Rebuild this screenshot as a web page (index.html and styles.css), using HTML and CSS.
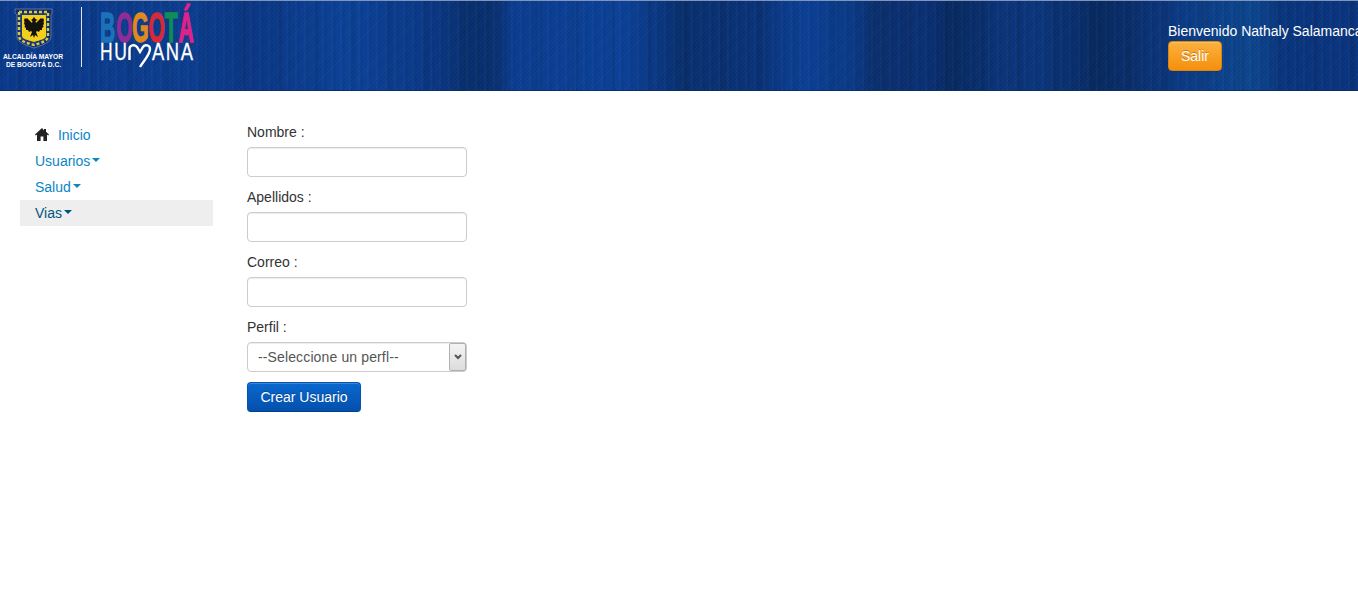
FILE: index.html
```html
<!DOCTYPE html>
<html lang="es">

<head>
	<meta charset="UTF-8">
	<title>Crear Usuario</title>
	<link rel="stylesheet" href="styles.css">
</head>

<body>
	<!-- cabecera -->
	<header class="top">
		<svg class="logo" width="200" height="89" viewBox="0 0 200 89">
			<!-- escudo -->
			<path class="shield-edge" d="M15 8h37v4l-1 2v21c0 7-9 9-17 12c-8-3-17-5-17-12V14l-2-2z"/>
			<path class="shield-trim" d="M19 11h29v24c0 5-7 7-14 9c-7-2-15-4-15-9z"/>
			<path class="shield-gold" d="M22 14h24v21c0 3-6 4-12 6c-6-2-12-3-12-6z"/>
			<path class="eagle" d="M34 16l1.500 2l2 1l-2 1l.5 2l2-2l3-3l1 1l1-1l1 2l-.5 2l.5 2l-1 1l.5 2l-1.500 1l0 2l-2 0l-1 2l-2-1l-1 1l2 5l-3-2l-1 3l-1-3l-3 2l2-5l-1-1l-2 1l-1-2l-2 0l0-2l-1.500-1l.5-2l-1-1l.5-2l-.5-2l1-2l1 1l1-1l3 3l2 2l.5-2l-1.500-1l1.500-1z"/>
			<!-- letrero alcaldia -->
			<text class="city" x="3" y="58" textLength="60" lengthAdjust="spacingAndGlyphs">ALCALDÍA MAYOR</text>
			<text class="city" x="6" y="66" textLength="55" lengthAdjust="spacingAndGlyphs">DE BOGOTÁ D.C.</text>
			<rect class="divider" x="81" y="6" width="1" height="60"/>
			<!-- bogota humana -->
			<g transform="translate(100 41) scale(.49 1)">
				<text class="big c1" x="0">B</text>
				<text class="big c2" x="33">O</text>
				<text class="big c3" x="66">G</text>
				<text class="big c4" x="99">O</text>
				<text class="big c5" x="132">T</text>
				<text class="big c6" x="160">Á</text>
			</g>
			<g transform="translate(100 59) scale(.76 1)">
				<text class="human">HU</text>
			</g>
			<path class="heart" d="M129.500 59V48c0-4 5-5 7.500-2l3 5l3-5c2-3 7-2 7 2c0 6-6 11-10 18"/>
			<g transform="translate(152 59) scale(.8 1)">
				<text class="human">ANA</text>
			</g>
		</svg>
		<div class="user">
			<p>Bienvenido Nathaly Salamanca</p>
			<a class="btn btn-exit" href="javascript:;">Salir</a>
		</div>
	</header>

	<div class="page">
		<!-- menu lateral -->
		<ul class="side">
			<li>
				<a href="javascript:;">
					<svg class="home" width="14" height="13" viewBox="0 0 14 13"><path d="M7 0L0 6.600l.8.9L2 6.400V13h3.600V8.600h2.800V13H12V6.400l1.200 1.100l.8-.9l-3-2.800V1H9v1.500z"/></svg>
					Inicio
				</a>
			</li>
			<li><a href="javascript:;">Usuarios<b class="caret"></b></a></li>
			<li><a href="javascript:;">Salud<b class="caret"></b></a></li>
			<li class="on"><a href="javascript:;">Vias<b class="caret"></b></a></li>
		</ul>

		<!-- formulario -->
		<form class="form">
			<label>Nombre :</label>
			<input type="text">
			<label>Apellidos :</label>
			<input type="text">
			<label>Correo :</label>
			<input type="text">
			<label>Perfil :</label>
			<div class="pick">
				<select>
					<option>--Seleccione un perfl--</option>
				</select>
				<span class="pick-arrow">
					<svg width="8" height="6" viewBox="0 0 8 6"><path d="M1 1l3 3l3-3"/></svg>
				</span>
			</div>
			<button class="btn btn-send" type="button">Crear Usuario</button>
		</form>
	</div>
</body>

</html>
```

FILE: styles.css
```css
* {
	margin: 0;
	padding: 0;
	box-sizing: border-box;
}
body {
	font-family: "Liberation Sans", Arial, sans-serif;
	font-size: 14px;
	line-height: 20px;
	color: #333;
	background-color: #fff;
	overflow-x: hidden;
}
a {
	text-decoration: none;
	color: #0c85c4;
}
li {
	list-style: none;
}

/* cabecera */
.top {
	display: flex;
	justify-content: space-between;
	height: 91px;
	overflow: hidden;
	border-top: 1px solid #7f95bd;
	border-bottom: 1px solid #08306f;
	background-image:
		repeating-linear-gradient(135deg, rgba(255, 255, 255, 0.02) 0 1px, rgba(0, 0, 0, 0.02) 1px 3px),
		repeating-linear-gradient(90deg, rgba(0, 0, 0, 0.04) 0 3px, transparent 3px 7px, rgba(255, 255, 255, 0.02) 7px 9px),
		repeating-linear-gradient(90deg, transparent 0 17px, rgba(0, 0, 0, 0.05) 17px 23px, transparent 23px 37px),
		linear-gradient(90deg,
			#0a3a8c 0, #0b3d90 190px, #0a3786 250px, #0b4299 350px, #0a3887 430px,
			#08306f 470px, #08306f 490px, #0a3d92 515px, #0b4199 620px, #0a3a8a 650px,
			#08306f 680px, #09337a 760px, #0b4097 800px, #0a3a88 850px, #0a2f6e 880px,
			#0a3076 925px, #072a62 955px, #0a347a 1000px, #0a367c 1040px, #072a62 1100px,
			#0a2f6f 1135px, #0a3a85 1180px, #0c4690 1250px, #08357e 1285px, #0a3480 1358px);
}
.logo {
	flex: none;
}
.shield-edge {
	fill: #12296a;
	stroke: #8fa0c4;
	stroke-width: 0.6;
}
.shield-trim {
	fill: #1a3a78;
	stroke: #d6cb3c;
	stroke-width: 2.4;
	stroke-dasharray: 3 2;
}
.shield-gold {
	fill: #f5cf1c;
}
.eagle {
	fill: #15130f;
}
.city {
	font-size: 7px;
	font-weight: bold;
	fill: #fff;
}
.divider {
	fill: #dfe6f2;
}
.big {
	font-size: 43px;
	font-weight: bold;
	stroke-width: 1.5px;
}
.c1 {
	fill: #1c72b8;
	stroke: #1c72b8;
}
.c2 {
	fill: #8e2d96;
	stroke: #8e2d96;
}
.c3 {
	fill: #e08a1e;
	stroke: #e08a1e;
}
.c4 {
	fill: #d42a3a;
	stroke: #d42a3a;
}
.c5 {
	fill: #0f8d55;
	stroke: #0f8d55;
}
.c6 {
	fill: #e0218a;
	stroke: #e0218a;
}
.human {
	font-size: 23px;
	letter-spacing: 2px;
	fill: #fff;
	stroke: #fff;
	stroke-width: 0.3px;
}
.heart {
	fill: none;
	stroke: #fff;
	stroke-width: 2.4;
}
.user {
	flex: none;
	width: 190px;
	padding-top: 20px;
	color: #fff;
	white-space: nowrap;
}

/* botones */
.btn {
	display: inline-block;
	height: 30px;
	padding: 0 12px;
	font-family: inherit;
	font-size: 14px;
	line-height: 28px;
	color: #fff;
	border-radius: 4px;
	text-shadow: 0 -1px 0 rgba(0, 0, 0, 0.25);
	box-shadow: inset 0 1px 0 rgba(255, 255, 255, 0.2), 0 1px 2px rgba(0, 0, 0, 0.05);
}
.btn-exit {
	border: 1px solid #d9860f;
	background-image: linear-gradient(#fbb13f, #f68f0c);
}
.btn-send {
	width: 114px;
	border: 1px solid #0652ad;
	border-bottom-color: #03408c;
	background-image: linear-gradient(#0a68cf, #0350ac);
}

/* pagina */
.page {
	display: flex;
	gap: 34px;
	padding: 31px 0 0 20px;
}
.side {
	flex: none;
	width: 193px;
}
.side li a {
	display: block;
	height: 26px;
	padding: 3px 15px;
}
.side li.on a {
	color: #005580;
	background-color: #eee;
}
.home {
	margin-right: 5px;
	vertical-align: -1px;
	fill: #222;
}
.caret {
	display: inline-block;
	width: 0;
	height: 0;
	margin: 7px 0 0 2px;
	vertical-align: top;
	border-top: 4px solid #0c85c4;
	border-left: 4px solid transparent;
	border-right: 4px solid transparent;
}
.side li.on .caret {
	border-top-color: #005580;
}

/* formulario */
.form {
	display: flex;
	flex-direction: column;
	align-items: flex-start;
	width: 220px;
}
.form label {
	margin-bottom: 5px;
}
.form input,
.form select {
	display: block;
	width: 220px;
	height: 30px;
	margin-bottom: 10px;
	font-family: inherit;
	font-size: 14px;
	color: #555;
	background-color: #fff;
	border: 1px solid #ccc;
	border-radius: 4px;
	box-shadow: inset 0 1px 1px rgba(0, 0, 0, 0.075);
}
.form input {
	padding: 0 10px;
}
.form select {
	padding: 0 10px;
	letter-spacing: 0.13px;
	appearance: none;
}
.pick {
	position: relative;
}
.pick-arrow {
	position: absolute;
	top: 1px;
	right: 1px;
	display: flex;
	align-items: center;
	justify-content: center;
	width: 17px;
	height: 28px;
	background-image: linear-gradient(#f4f4f4, #dcdcdc);
	border: 1px solid #b0b0b0;
	border-radius: 2px;
}
.pick-arrow svg {
	fill: none;
	stroke: #555;
	stroke-width: 2;
}
```
